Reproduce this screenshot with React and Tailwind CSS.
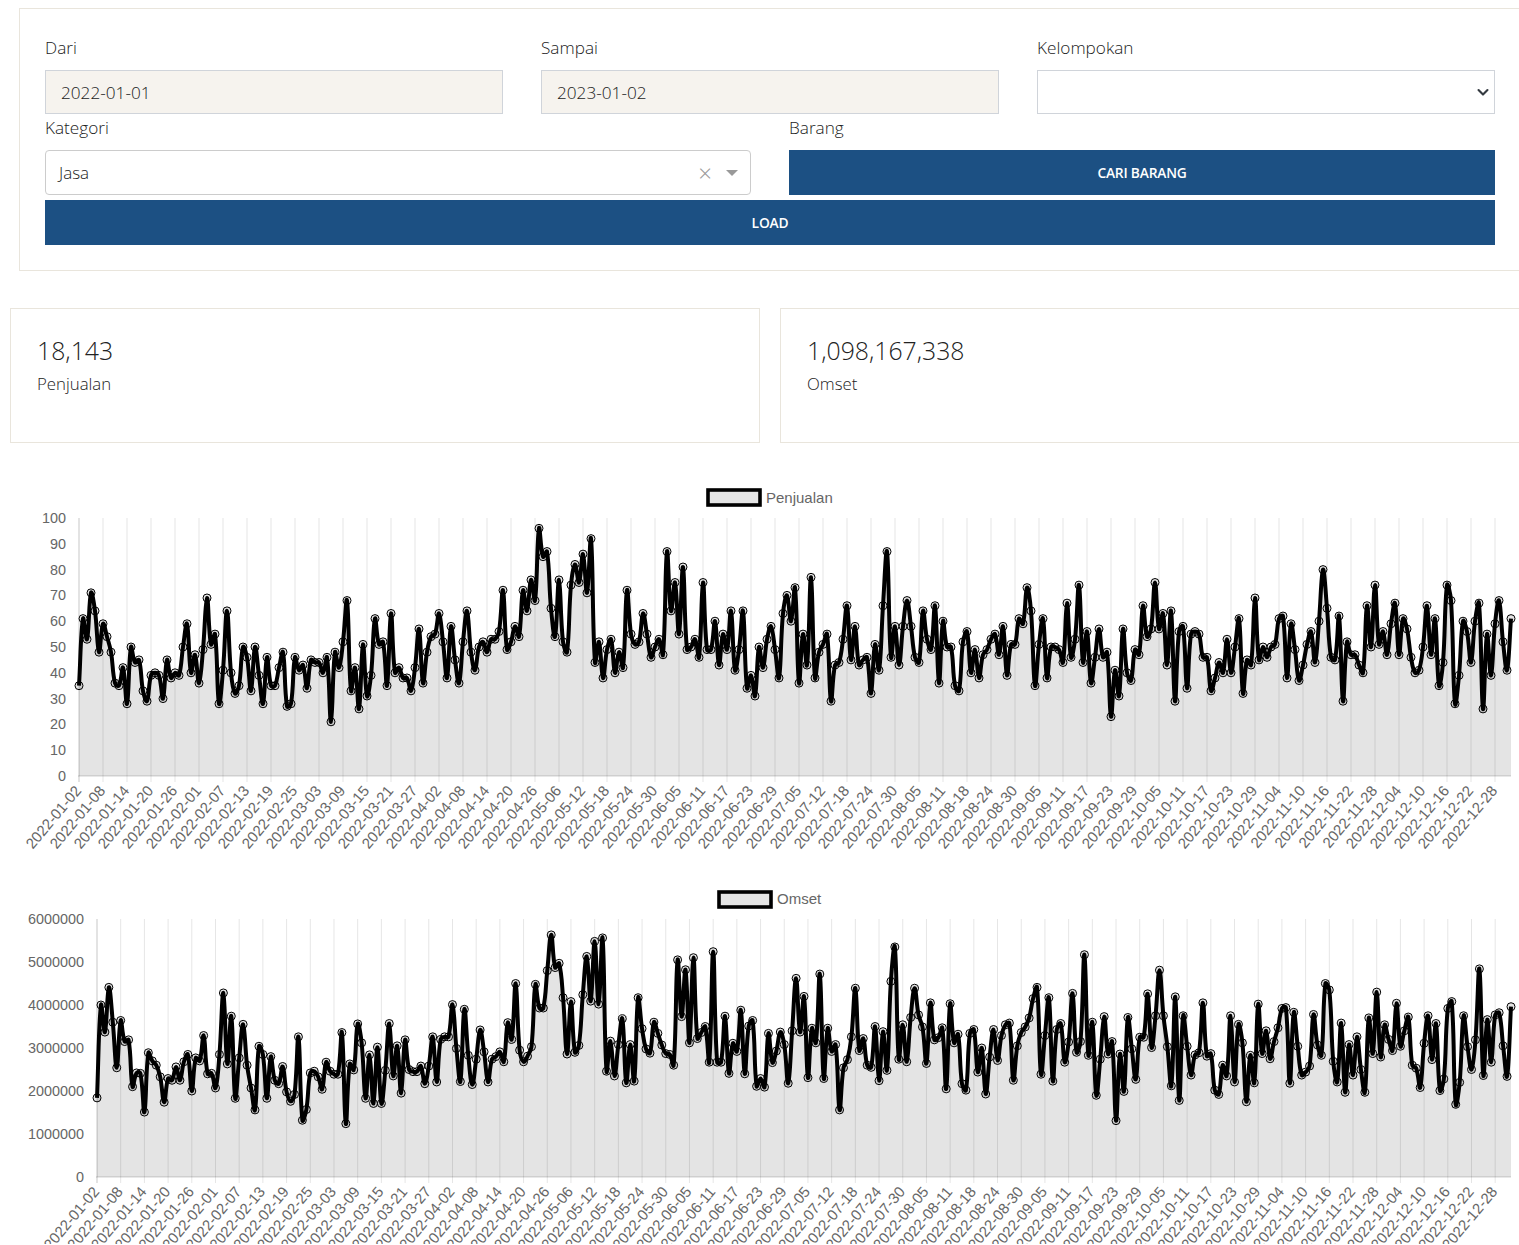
import React from 'react';

const LABELS = ['01-02','01-08','01-14','01-20','01-26','02-01','02-07','02-13','02-19','02-25','03-03','03-09','03-15','03-21','03-27','04-02','04-08','04-14','04-20','04-26','05-06','05-12','05-18','05-24','05-30','06-05','06-11','06-17','06-23','06-29','07-05','07-12','07-18','07-24','07-30','08-05','08-11','08-18','08-24','08-30','09-05','09-11','09-17','09-23','09-29','10-05','10-11','10-17','10-23','10-29','11-04','11-10','11-16','11-22','11-28','12-04','12-10','12-16','12-22','12-28'].map(d => '2022-' + d);

const PENJUALAN = [
  35,61,53,71,64,48,59,54,48,36,35,42,28,50,44,45,33,29,39,40,39,30,45,38,40,39,50,59,40,47,36,49,69,51,55,28,41,64,40,32,35,50,46,33,50,39,28,46,35,35,42,48,27,28,46,41,43,34,45,44,44,40,46,21,48,42,52,68,33,42,26,51,31,39,61,51,52,35,63,40,42,
  38,38,33,42,57,36,48,54,55,63,52,38,58,45,36,52,64,48,41,50,52,48,53,53,56,72,49,52,58,54,72,64,76,68,96,85,87,65,54,76,52,48,74,82,75,86,71,92,44,52,38,49,53,40,48,42,72,55,51,52,63,55,46,50,53,47,87,64,75,55,81,49,50,53,46,75,49,49,60,43,55,49,64,41,49,64,34,39,31,50,42,53,58,49,38,
  63,70,60,73,36,55,43,77,38,48,51,55,29,43,44,53,66,45,58,43,45,46,32,51,41,66,87,46,58,43,58,68,58,46,44,64,53,49,66,36,60,50,50,35,33,52,56,40,49,38,47,49,53,55,47,58,39,51,51,61,59,73,64,35,51,61,38,50,50,49,44,67,46,53,74,44,56,36,46,57,46,48,23,41,31,57,40,37,49,47,66,54,57,75,57,
  63,43,64,29,56,58,34,55,56,55,46,46,33,38,44,40,53,40,50,61,32,45,43,69,45,50,46,50,51,61,62,38,59,49,37,43,51,56,44,60,80,65,46,45,62,29,52,47,47,43,40,66,50,74,51,56,47,59,67,47,61,57,46,40,41,50,66,47,61,35,44,74,68,28,39,60,56,44,60,67,26,55,39,59,68,52,41,61,
];

// values in millions
const OMSET = [
  1.84,4.00,3.37,4.41,3.60,2.54,3.64,3.15,3.19,2.10,2.42,2.41,1.51,2.89,2.70,2.60,2.33,1.74,2.29,2.25,2.56,2.25,2.68,2.85,2.00,2.77,2.70,3.29,2.40,2.41,2.07,2.85,4.28,2.63,3.74,1.83,2.77,3.55,2.60,2.07,1.56,3.04,2.85,1.83,2.80,2.25,2.17,2.57,1.98,1.76,1.92,3.26,1.32,1.57,2.42,2.46,2.33,2.04,2.67,2.46,2.39,2.39,3.36,1.24,2.63,2.49,3.56,3.12,1.83,2.84,1.71,3.02,1.71,2.48,3.57,2.35,3.05,1.95,
  3.19,2.50,2.45,2.45,2.58,2.17,2.58,3.26,2.21,3.20,3.26,3.26,4.01,2.99,2.22,3.90,2.83,2.15,2.74,3.42,2.91,2.21,2.74,2.80,2.91,2.68,3.59,3.20,4.50,2.95,2.68,2.81,3.03,4.48,3.93,3.93,4.80,5.63,4.87,4.97,4.17,2.86,4.08,2.90,3.06,4.24,5.13,4.09,5.48,4.02,5.56,2.46,3.16,2.35,3.08,3.68,2.19,3.08,2.23,4.17,3.45,2.98,2.88,3.60,3.34,3.07,2.87,2.85,2.60,5.05,3.73,4.82,3.12,5.10,3.22,3.36,3.50,2.67,5.24,2.67,2.67,3.74,2.41,3.11,2.92,3.88,2.40,3.51,3.64,2.11,2.29,2.09,3.34,2.66,2.93,3.37,
  3.08,2.18,3.40,4.62,3.37,4.20,2.31,3.46,3.12,4.72,2.29,3.46,2.92,3.08,1.56,2.54,2.73,3.26,4.39,2.94,3.22,2.60,2.55,3.50,2.24,3.38,2.48,4.55,5.35,2.74,3.54,2.68,3.71,4.39,3.77,3.49,2.64,4.05,3.19,3.24,3.47,2.05,4.03,3.12,3.32,2.17,2.02,3.34,3.43,2.44,3.00,1.93,2.79,3.43,2.71,3.29,3.54,3.58,2.25,3.05,3.36,3.49,3.70,4.15,4.41,2.39,3.29,4.17,2.23,3.43,3.57,2.67,3.14,4.27,2.90,3.15,5.17,2.83,3.60,1.90,2.74,3.73,2.86,3.15,1.31,2.86,1.99,3.71,2.98,2.27,3.25,3.25,4.26,3.01,3.75,4.81,
  3.75,3.03,2.12,4.19,1.78,3.75,3.04,2.37,2.84,2.89,4.05,2.81,2.87,2.02,1.92,2.60,2.35,3.75,2.21,3.55,3.12,1.75,2.83,2.19,4.02,2.87,3.40,2.75,3.15,3.47,3.92,3.94,2.18,3.83,3.04,2.37,2.44,2.58,3.78,3.07,2.83,4.50,4.35,2.69,2.21,3.58,1.97,3.08,2.37,3.26,2.50,1.97,3.70,2.87,4.30,2.79,3.54,3.20,2.94,4.04,3.04,3.40,3.72,2.60,2.53,2.08,3.11,3.75,2.73,3.57,2.01,2.28,3.92,4.08,1.69,2.20,3.75,3.03,2.50,3.19,4.84,2.36,3.66,2.67,3.77,3.82,3.05,2.34,3.96,
];

// chart.js style spline, tension 0.4
const splinePath = (pts) => {
  const t = 0.4;
  const cps = pts.map((p, i) => {
    const a = pts[i - 1] || p;
    const b = pts[i + 1] || p;
    const d01 = Math.hypot(p[0] - a[0], p[1] - a[1]);
    const d12 = Math.hypot(b[0] - p[0], b[1] - p[1]);
    const s = d01 + d12 || 1;
    const fa = (t * d01) / s;
    const fb = (t * d12) / s;
    return {
      prev: [p[0] - fa * (b[0] - a[0]), p[1] - fa * (b[1] - a[1])],
      next: [p[0] + fb * (b[0] - a[0]), p[1] + fb * (b[1] - a[1])],
    };
  });
  let d = `M${pts[0][0]} ${pts[0][1]}`;
  for (let i = 1; i < pts.length; i++) {
    const c1 = cps[i - 1].next;
    const c2 = cps[i].prev;
    d += `C${c1[0].toFixed(2)} ${c1[1].toFixed(2)} ${c2[0].toFixed(2)} ${c2[1].toFixed(2)} ${pts[i][0].toFixed(2)} ${pts[i][1].toFixed(2)}`;
  }
  return d;
};

const LineChart = ({ data, max, yTicks, left, top, bottom, legend, legendX, legendY, height }) => {
  const right = 1511;
  const step = (right - left) / (data.length - 1);
  const pts = data.map((v, i) => [left + i * step, bottom - (v / max) * (bottom - top)]);
  const line = splinePath(pts);
  const ticks = LABELS.map((l, i) => ({ l, x: left + i * 6 * step }));

  return (
    <svg width="1519" height={height} className="block" style={{ fontFamily: '"Liberation Sans", Arial, sans-serif' }}>
      <rect x={legendX + 1} y={legendY} width="52" height="15" fill="#e4e4e4" stroke="#000" strokeWidth="3.6" />
      <text x={legendX + 59} y="24" fontSize="15" fill="#666">{legend}</text>

      {ticks.map((t, i) => (
        <line key={i} x1={t.x} x2={t.x} y1={top} y2={bottom + 6} stroke="#000" strokeOpacity={i === 0 ? 0.22 : 0.1} />
      ))}
      <line x1={left - 1} x2={right} y1={bottom} y2={bottom} stroke="#000" strokeOpacity="0.18" />

      {yTicks.map((t) => (
        <text key={t.label} x={left - 13} y={bottom - (t.v / max) * (bottom - top) + 5} fontSize="14.4" fill="#666" textAnchor="end">
          {t.label}
        </text>
      ))}

      <path d={`${line}L${right} ${bottom}L${left} ${bottom}Z`} fill="#000" fillOpacity="0.105" />
      <path d={line} fill="none" stroke="#000" strokeWidth="4" />
      {pts.map((p, i) => (
        <circle key={i} cx={p[0]} cy={p[1]} r="4" fill="#000" fillOpacity="0.1" stroke="#000" strokeWidth="1" />
      ))}

      {ticks.map((t, i) => (
        <text key={i} transform={`translate(${t.x + 3} ${bottom + 15}) rotate(-50)`} fontSize="15" fill="#666" textAnchor="end">
          {t.l}
        </text>
      ))}
    </svg>
  );
};

const Field = ({ label, children }) => (
  <div>
    <label className="block h-[24px] mb-[10px] text-[17.2px] leading-[24px] font-light text-[#222]">{label}</label>
    {children}
  </div>
);

const DateInput = ({ value }) => (
  <input readOnly value={value} className="w-full h-[44px] px-[15px] bg-[#f6f3ee] border border-[#d0d4da] text-[17.2px] font-light text-[#222] focus:outline-none" />
);

const Stat = ({ value, label, className }) => (
  <div className={`h-[135px] bg-white border border-[#e9e5dc] pl-[26px] pt-[24px] ${className}`}>
    <div className="text-[24.8px] leading-[34px] font-light text-[#222]">{value}</div>
    <div className="mt-[5px] text-[16.8px] leading-[24px] font-light text-[#222]">{label}</div>
  </div>
);

const App = () => {
  return (
    <div className="w-[1519px] h-[1245px] overflow-hidden bg-white text-[#222]" style={{ fontFamily: '"Open Sans", sans-serif' }}>
      <div className="ml-[19px] mt-[8px] w-[1520px] h-[263px] border border-[#e9e5dc] pt-[27px] pl-[25px]">
        <div className="w-[1450px]">
          <div className="grid grid-cols-3 gap-x-[38px]">
            <Field label="Dari"><DateInput value="2022-01-01" /></Field>
            <Field label="Sampai"><DateInput value="2023-01-02" /></Field>
            <Field label="Kelompokan">
              <div className="relative">
                <select className="block w-full h-[44px] px-[16px] bg-white border border-[#d0d4da] text-[17px] appearance-none">
                  <option></option>
                </select>
                <svg viewBox="0 0 16 16" className="absolute right-[4px] top-[16px] w-[16px] h-[13px] pointer-events-none" fill="none" stroke="#343a40" strokeWidth="2.6" strokeLinecap="round" strokeLinejoin="round">
                  <path d="M2.5 5l5.5 5.5L13.5 5" />
                </svg>
              </div>
            </Field>
          </div>
          <div className="grid grid-cols-2 gap-x-[38px] mt-[2px]">
            <Field label="Kategori">
              <div className="flex items-center h-[45px] pl-[13px] pr-[12px] border border-[#cccccc] rounded-[4px] bg-white">
                <span className="flex-1 text-[17px] font-light text-[#222]">Jasa</span>
                <span className="mr-[14px] text-[#999] text-[24px] leading-none font-light">×</span>
                <span className="w-0 h-0 border-x-[6px] border-x-transparent border-t-[6px] border-t-[#999]"></span>
              </div>
            </Field>
            <Field label="Barang">
              <button className="w-full h-[45px] pt-[1px] bg-[#1c5083] text-white text-[13.8px] font-semibold tracking-[-0.2px]">CARI BARANG</button>
            </Field>
          </div>
          <button className="block w-full h-[45px] pt-[1px] mt-[5px] bg-[#1c5083] text-white text-[13.8px] font-semibold tracking-[-0.2px]">LOAD</button>
        </div>
      </div>

      <div className="flex gap-[20px] ml-[10px] mt-[37px]">
        <Stat value="18,143" label="Penjualan" className="w-[750px] shrink-0" />
        <Stat value="1,098,167,338" label="Omset" className="w-[760px] shrink-0" />
      </div>

      <div className="mt-[36px]">
        <LineChart
          data={PENJUALAN}
          max={100}
          yTicks={[0,10,20,30,40,50,60,70,80,90,100].map(v => ({ v, label: String(v) }))}
          left={79}
          top={39}
          bottom={297}
          legend="Penjualan"
          legendX={707}
          legendY={11}
          height={401}
        />
        <LineChart
          data={OMSET}
          max={6}
          yTicks={[0,1,2,3,4,5,6].map(v => ({ v, label: v === 0 ? '0' : `${v}000000` }))}
          left={97}
          top={39}
          bottom={297}
          legend="Omset"
          legendX={718}
          legendY={12}
          height={364}
        />
      </div>
    </div>
  );
};

export default App;
